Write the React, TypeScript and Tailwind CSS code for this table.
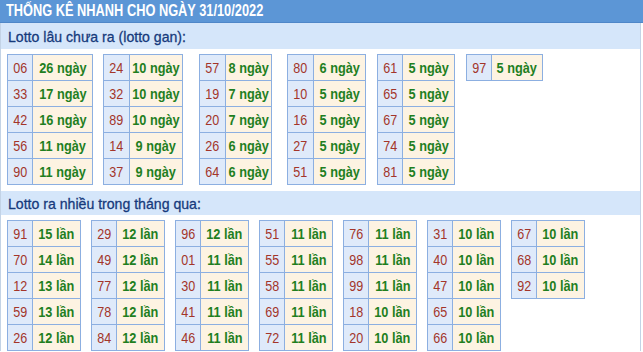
import React from "react";

type Item = [string, string];

const gan: { ml: string; nw: string; vw: string; rows: Item[] }[] = [
  { ml: "ml-[6px]", nw: "w-[25px]", vw: "w-[60px]", rows: [["06", "26 ngày"], ["33", "17 ngày"], ["42", "16 ngày"], ["56", "11 ngày"], ["90", "11 ngày"]] },
  { ml: "ml-[10px]", nw: "w-[26px]", vw: "w-[53px]", rows: [["24", "10 ngày"], ["32", "10 ngày"], ["89", "10 ngày"], ["14", "9 ngày"], ["37", "9 ngày"]] },
  { ml: "ml-[16px]", nw: "w-[26px]", vw: "w-[46px]", rows: [["57", "8 ngày"], ["19", "7 ngày"], ["20", "7 ngày"], ["26", "6 ngày"], ["64", "6 ngày"]] },
  { ml: "ml-[15px]", nw: "w-[26px]", vw: "w-[52px]", rows: [["80", "6 ngày"], ["10", "5 ngày"], ["16", "5 ngày"], ["27", "5 ngày"], ["51", "5 ngày"]] },
  { ml: "ml-[11px]", nw: "w-[25px]", vw: "w-[52px]", rows: [["61", "5 ngày"], ["65", "5 ngày"], ["67", "5 ngày"], ["74", "5 ngày"], ["81", "5 ngày"]] },
  { ml: "ml-[11px]", nw: "w-[25px]", vw: "w-[51px]", rows: [["97", "5 ngày"]] },
];

const nhieu: Item[][] = [
  [["91", "15 lần"], ["70", "14 lần"], ["12", "13 lần"], ["59", "13 lần"], ["26", "12 lần"]],
  [["29", "12 lần"], ["49", "12 lần"], ["77", "12 lần"], ["78", "12 lần"], ["84", "12 lần"]],
  [["96", "12 lần"], ["01", "11 lần"], ["30", "11 lần"], ["41", "11 lần"], ["46", "11 lần"]],
  [["51", "11 lần"], ["55", "11 lần"], ["58", "11 lần"], ["69", "11 lần"], ["72", "11 lần"]],
  [["76", "11 lần"], ["98", "11 lần"], ["99", "11 lần"], ["18", "10 lần"], ["20", "10 lần"]],
  [["31", "10 lần"], ["40", "10 lần"], ["47", "10 lần"], ["65", "10 lần"], ["66", "10 lần"]],
  [["67", "10 lần"], ["68", "10 lần"], ["92", "10 lần"]],
];

function Table({ rows, nw, vw, ml }: { rows: Item[]; nw: string; vw: string; ml?: string }) {
  return (
    <div className={`self-start border-l border-t border-[#8cafe1] ${ml ?? ""}`}>
      {rows.map(([n, v], i) => (
        <div key={i} className="flex h-[26px]">
          <div className={`${nw} flex items-center justify-center border-r border-b border-[#8cafe1] bg-[#dfeafa] text-[15px] text-[#a3352a]`}>
            <span className="inline-block scale-x-[0.84] whitespace-nowrap">{n}</span>
          </div>
          <div className={`${vw} flex items-center justify-center border-r border-b border-[#8cafe1] bg-[#fdf3e2] text-[15px] font-bold text-[#1f7f1f]`}>
            <span className="inline-block scale-x-[0.85] whitespace-nowrap">{v}</span>
          </div>
        </div>
      ))}
    </div>
  );
}

export default function App() {
  return (
    <div className="w-[643px] bg-white font-['Liberation_Sans',Arial,sans-serif] leading-none">
      <div className="flex h-[23px] items-center border-b border-[#4f87c8] bg-[#5c96d6] pl-[6px] text-[16px] font-bold text-white">
        <span className="inline-block origin-left scale-x-[0.8] whitespace-nowrap">THỐNG KÊ NHANH CHO NGÀY 31/10/2022</span>
      </div>
      <div className="w-[641px] border-l border-r border-[#c3d3e6]">
        <div className="flex h-[26px] items-center bg-[#d5e6fa] pl-[7px] text-[15px] text-[#163a7c]">
          <span className="inline-block origin-left scale-x-[0.94] whitespace-nowrap [-webkit-text-stroke:0.3px_#163a7c]">Lotto lâu chưa ra (lotto gan):</span>
        </div>
        <div className="mt-[5px] flex">
          {gan.map((t, i) => (
            <Table key={i} rows={t.rows} nw={t.nw} vw={t.vw} ml={t.ml} />
          ))}
        </div>
        <div className="mt-[6px] flex h-[24px] items-center bg-[#d5e6fa] pl-[7px] text-[15px] text-[#163a7c]">
          <span className="inline-block origin-left scale-x-[0.94] whitespace-nowrap [-webkit-text-stroke:0.3px_#163a7c]">Lotto ra nhiều trong tháng qua:</span>
        </div>
        <div className="mt-[5px] flex gap-[10px] pl-[6px]">
          {nhieu.map((rows, i) => (
            <Table key={i} rows={rows} nw="w-[25px]" vw="w-[48px]" />
          ))}
        </div>
      </div>
    </div>
  );
}
